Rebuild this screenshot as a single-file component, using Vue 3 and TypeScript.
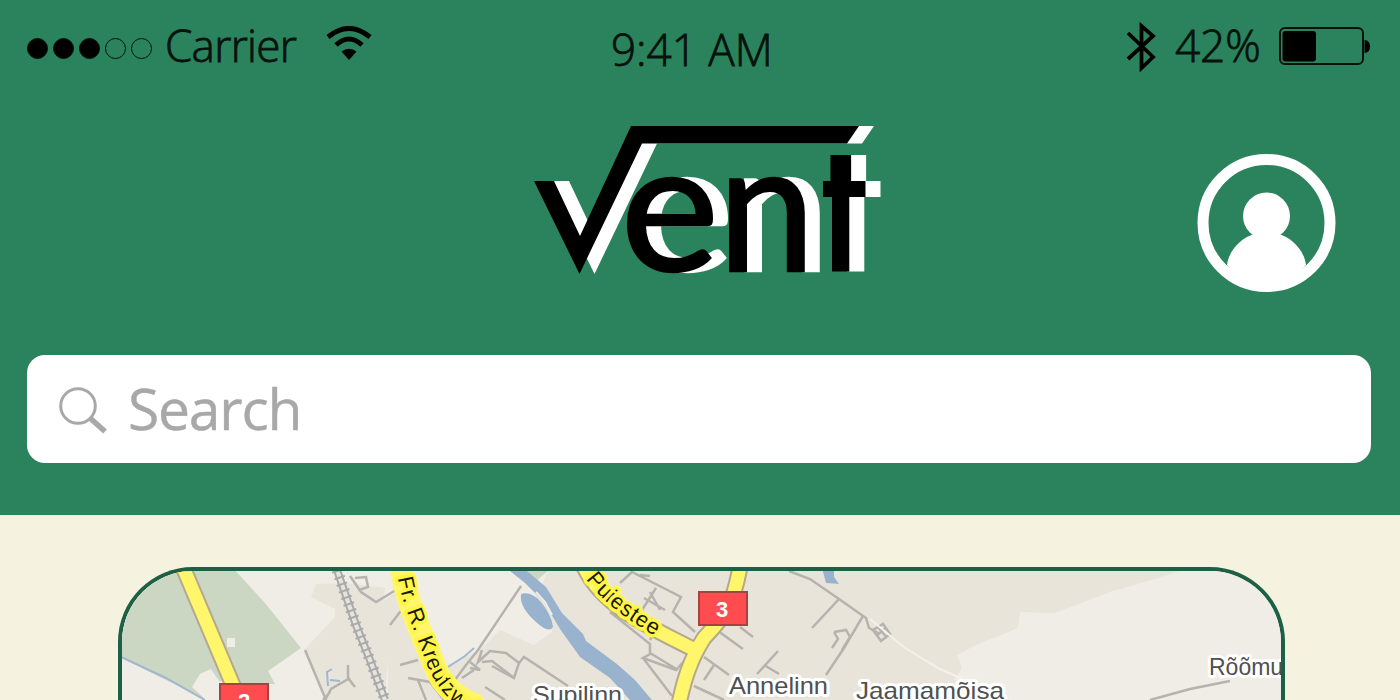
<script setup lang="ts">
const signal: boolean[] = [true, true, true, false, false]

const beigeAreas: string[] = [
  'M305 649L335 617L335 609L311 597L316 584L345 583L385 588L379 635L388 662L384 700H325Z',
  'M376 632L384 600L400 590L440 700H388L388 662Z',
  'M440 668L480 650L500 630L534 645L552 632L552 622L535 600L550 567H1190L1165 576L1110 592L1055 613L1020 612L1018 628L976 645L957 655L962 668L954 680L1010 700H430Z',
]

const streets: string[] = [
  'M305 650L326 700', 'M325 700L331 689L350 678M330 692L323 700M348 665V678L355 687',
  'M350 576L361 592L376 602L396 590M355 578L366 577L368 587L359 590',
  'M390 625L400 612L410 607', 'M400 665L418 660',
  'M521 586L478 650L466 665L452 684',
  'M470 662L480 670L470 668M482 650L478 662L490 651L506 653L519 663L514 678L492 661L482 662',
  'M519 663L524 657L568 686M514 678L492 666', 'M485 687L505 700',
  'M408 678L430 682L444 700M418 680L426 700M462 678L474 670',
  'M610 612L650 644L650 654L643 658L676 670L685 660M650 640L656 630M650 653L678 670M643 658L672 696',
  'M620 583L632 572L681 597L673 612L695 632M640 575L650 576M644 598L665 610M650 592L660 610M656 588L642 610',
  'M789 571L810 579L839 599L866 618L869 628L880 634',
  'M839 599L812 628', 'M863 616L844 648L826 675',
  'M834 632L846 630L850 637L842 650M834 632L838 639L832 648',
  'M740 627L753 637M718 631L743 649', 'M704 657L729 675M714 665L704 680',
  'M778 651L757 674M764 665L779 674', 'M694 686L724 700',
  'M873 630L883 624L890 634L881 641ZM876 636L886 628M878 627L887 638', 'M1150 700L1190 689L1230 681',
]
</script>

<template>
  <main class="screen">
    <header class="header">
      <div class="status">
        <div class="left">
          <div class="signal">
            <i v-for="(on, i) in signal" :key="i" class="dot" :class="{ on }"></i>
          </div>
          <span class="carrier">Carrier</span>
          <svg class="wifi" width="46" height="36" viewBox="0 0 46 36">
            <path class="arc" d="M2 11Q23-6 44 11M10 19Q23 7 36 19" />
            <path d="M15.500 25.500Q23 20 30.500 25.500L27 29.500L23 34L19 29.500Z" />
          </svg>
        </div>
        <span class="time">9:41 AM</span>
        <div class="right">
          <svg class="bluetooth" width="30" height="50" viewBox="0 0 30 50">
            <path d="M2 11L27 35L15.500 46V4L27 14L2 37" />
          </svg>
          <span class="percent">42%</span>
          <svg class="battery" width="94" height="40" viewBox="0 0 94 40">
            <rect class="case" x="2" y="2" width="83" height="36" rx="5" />
            <rect x="4.500" y="5" width="33.500" height="30.500" rx="3" />
            <path d="M86.500 14Q92 14.500 92 20.500T86.500 27Z" />
          </svg>
        </div>
      </div>

      <div class="brand">
        <svg class="logo" width="360" height="160" viewBox="530 120 360 160" role="img" aria-label="Vent">
          <defs>
            <clipPath id="cutT"><path d="M823 155H866V197H849.300V271.500H832V197H823Z" /></clipPath>
          </defs>
          <g class="shadowed">
            <path d="M534 181H554L580 236L631 126H859L847 143.500H642L579.500 274Z" />
            <text class="round" transform="translate(620.500 271) scale(1.030 1)">e</text>
            <text class="round" transform="translate(718 270.500) scale(.960 1)">n</text>
            <g clip-path="url(#cutT)">
              <text class="cross" transform="translate(818.500 295) scale(.82 1.210)">t</text>
            </g>
          </g>
        </svg>
        <svg class="avatar" width="140" height="140" viewBox="0 0 140 140">
          <circle class="ring" cx="69.500" cy="70" r="63.500" />
          <circle cx="69.500" cy="63" r="23.500" />
          <path d="M30 112C32 97 44 85 57 81H82C95 85 107 97 109 112Q92 133 69.500 133T30 112Z" />
        </svg>
      </div>

      <label class="search">
        <svg width="50" height="50" viewBox="0 0 50 50">
          <circle cx="20" cy="20" r="17.300" />
          <path d="M32 32L47 45.500" />
        </svg>
        <span>Search</span>
      </label>
    </header>

    <section class="content">
      <div class="map">
        <svg width="1159" height="129" viewBox="122 571 1159 129">
          <rect class="land" x="118" y="567" width="1167" height="133" />
          <path v-for="(d, i) in beigeAreas" :key="`a${i}`" class="beige" :d="d" />
          <path class="park" d="M118 567H232L265 603L301 648L268 671L275 684H252L219 681L211 669L200 674L192 687L206 700L166 680L118 656Z" />
          <path class="park" d="M515 570H549L533 584Z" />
          <rect class="land" x="227" y="638" width="8" height="9" />
          <path class="brook" d="M121 657L166 678L205 700M328 686L327 672L332 669M330 680L340 681M448 667L465 656L474 648" />

          <path v-for="(d, i) in streets" :key="`s${i}`" class="street" :d="d" />
          <path class="light-street" d="M870 619L905 648L940 669L965 680" />
          <path class="rail" d="M337 570L356 625L370 660L385 700" />
          <path class="rail-gap" d="M337 570L356 625L370 660L385 700" />
          <path class="ties" d="M337 570L356 625L370 660L385 700" />

          <path class="water" d="M505 567L522 567L546 587L562 613L583 634L586 641L617 664L635 680L652 700H630L610 678L580 657L560 629L544 602L525 583Z" />
          <path class="water" d="M521 594Q531 591 541 602Q552 616 553 627Q549 634 536 622Q519 607 521 594Z" />
          <path class="water" d="M822 568H834V577L839 584L826 583Z" />
          <path class="bridge" d="M536 592L545 602L552 615" />

          <path class="road-edge" d="M183 567L235 690" />
          <path class="road" d="M183 567L235 690" />
          <path class="road-edge" d="M740 567C732 610 724 616 704 638C690 660 684 680 679 704M584 567C603 607 650 627 695 650" />
          <path class="road" d="M740 567C732 610 724 616 704 638C690 660 684 680 679 704M584 567C603 607 650 627 695 650" />
          <path class="road wide" d="M401 567C406 600 420 630 430 654C438 678 448 695 478 706" />

          <path id="kreutz" class="guide" d="M398 578C401 600 414 630 423 654C431 678 444 700 470 714L490 720" />
          <path id="puiestee" class="guide" d="M586 579C604 604 630 622 669 644" />
          <text class="road-name"><textPath href="#kreutz">Fr. R. Kreutzwaldi</textPath></text>
          <text class="road-name"><textPath href="#puiestee">Puiestee</textPath></text>

          <rect class="badge" x="699" y="592" width="48" height="33" />
          <text class="number" x="722" y="617">3</text>
          <rect class="badge" x="220" y="684" width="48" height="33" />
          <text class="number" x="244" y="709">2</text>

          <text class="place" x="533" y="703" textLength="89" lengthAdjust="spacingAndGlyphs">Supilinn</text>
          <text class="place" x="729" y="694" textLength="99" lengthAdjust="spacingAndGlyphs">Annelinn</text>
          <text class="place" x="856" y="699" textLength="148" lengthAdjust="spacingAndGlyphs">Jaamamõisa</text>
          <text class="place thin" x="1209" y="675">Rõõmu</text>
        </svg>
      </div>
    </section>
  </main>
</template>

<style scoped>
.screen {
  width: 1400px;
  height: 700px;
  overflow: hidden;
  background: #f5f3df;
  font-family: "Open Sans", "Noto Sans", sans-serif;
}
.header {
  box-sizing: border-box;
  height: 515px;
  padding: 18px 29px 0 27px;
  background: #2b835d;
}
.status {
  display: grid;
  grid-template-columns: 584px 180px 1fr;
  align-items: start;
  height: 100px;
  color: #06120c;
  white-space: nowrap;
}
.left, .right { display: flex; align-items: flex-start; }
.right { justify-content: flex-end; }
.signal { display: flex; gap: 5px; margin-top: 20px; }
.dot {
  box-sizing: border-box;
  width: 21px;
  height: 21px;
  border: 1.5px solid #06120c;
  border-radius: 50%;
}
.dot.on { background: #000; }
.carrier, .time, .percent {
  font-size: 44px;
  line-height: 56px;
  font-weight: 300;
  -webkit-text-stroke: 0.8px #06120c;
}
.carrier { width: 131px; margin: -1px 0 0 13px; letter-spacing: -0.7px; }
.time { margin: 3px 0 0; }
.percent { width: 84px; margin: -1px 0 0 19px; }
.wifi { margin: 8px 0 0 30px; }
.arc { fill: none; stroke: #000; stroke-width: 5; }
.bluetooth { margin-top: 4px; fill: none; stroke: #000; stroke-width: 3.8; }
.battery { margin: 8px -1px 0 19px; }
.case { fill: none; stroke: #06120c; stroke-width: 2; }

.brand {
  display: flex;
  justify-content: space-between;
  height: 237px;
  padding-left: 503px;
  padding-right: 34px;
}
.logo { margin-top: 2px; }
.avatar { margin-top: 35px; fill: #fff; }
.ring { fill: none; stroke: #fff; stroke-width: 11; }
.shadowed { filter: drop-shadow(15px 0 0 #fff); }
.round {
  font: 400 181px Lato, sans-serif;
  stroke: #000;
  stroke-width: 2.5;
}
.cross { font: 700 172px Inter, sans-serif; }

.search {
  display: flex;
  align-items: center;
  box-sizing: border-box;
  height: 108px;
  padding-left: 31px;
  border-radius: 18px;
  background: #fff;
  color: #a8a8a8;
  font-size: 57px;
  letter-spacing: -1.2px;
}
.search svg { margin-top: 3px; fill: none; stroke: #a8a8a8; stroke-width: 3; }
.search path { stroke-width: 5.5; }
.search span { margin: -2px 0 0 20px; line-height: 80px; -webkit-text-stroke: 0.4px #a8a8a8; }

.content { padding: 52px 115px 0 118px; }
.map {
  box-sizing: border-box;
  width: 1167px;
  height: 133px;
  border: 4px solid #1d6045;
  border-bottom: 0;
  border-radius: 75px 75px 0 0;
  overflow: hidden;
}
.map svg { display: block; }
.land { fill: #f0ede6; }
.beige { fill: #e8e4da; }
.park { fill: #cbd6c3; }
.water { fill: #99b3cf; }
.brook { fill: none; stroke: #9fb8ce; stroke-width: 2; }
.street { fill: none; stroke: #b6b3ae; stroke-width: 2.5; }
.light-street { fill: none; stroke: #f4f1ea; stroke-width: 2; }
.bridge { fill: none; stroke: #f0ede6; stroke-width: 2; }
.rail { fill: none; stroke: #aaa; stroke-width: 8; }
.rail-gap { fill: none; stroke: #e6e4df; stroke-width: 4; }
.ties { fill: none; stroke: #aaa; stroke-width: 11; stroke-dasharray: 2 5; }
.road-edge { fill: none; stroke: #b5a98c; stroke-width: 17; }
.road { fill: none; stroke: #fff66c; stroke-width: 13; }
.wide { stroke-width: 23; }
.guide { fill: none; }
.road-name {
  font: 22px "Liberation Sans", sans-serif;
  letter-spacing: 0.6px;
  fill: #19180c;
  stroke: #fff546;
  stroke-width: 7;
  stroke-linejoin: round;
  paint-order: stroke;
}
.badge { fill: #ff4c4f; stroke: #a64244; stroke-width: 2; }
.number {
  font: 700 22px "Liberation Sans", sans-serif;
  fill: #fff;
  text-anchor: middle;
}
.place {
  font: 24px "Liberation Sans", sans-serif;
  fill: #505050;
  stroke: #fff;
  stroke-width: 6;
  stroke-linejoin: round;
  paint-order: stroke;
}
.thin { font-size: 23px; }
</style>

<style>
body { overflow: hidden; }
</style>
